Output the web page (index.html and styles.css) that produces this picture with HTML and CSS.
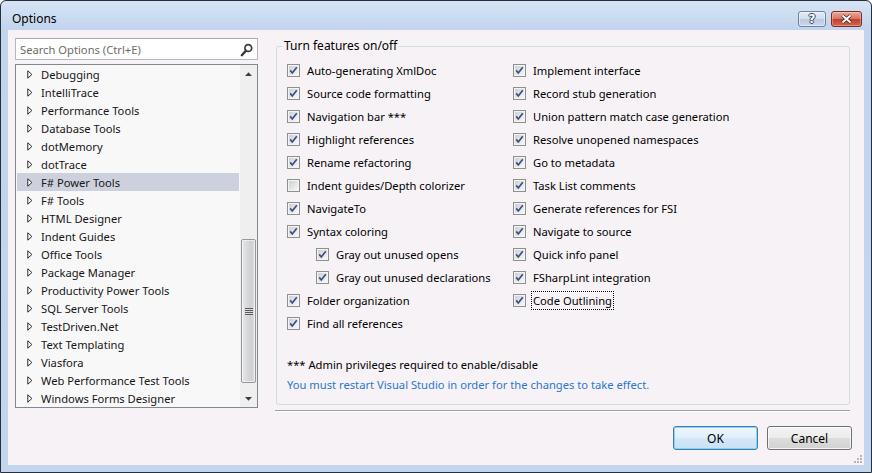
FILE: index.html
```html
<!DOCTYPE html>
<html>
<head>
<meta charset="utf-8">
<title>Options</title>
<link rel="stylesheet" href="styles.css">
</head>
<body>
<svg class="defs" width="0" height="0">
  <defs>
    <linearGradient id="cbg" x1="0" y1="0" x2="1" y2="1">
      <stop offset="0" stop-color="#cfd0d2"/>
      <stop offset="1" stop-color="#f7f7f7"/>
    </linearGradient>
    <symbol id="cb-on" viewBox="0 0 13 13">
      <rect x="0.5" y="0.5" width="12" height="12" fill="#f4f4f4" stroke="#8e8f8f"/>
      <rect x="2" y="2" width="9" height="9" fill="url(#cbg)"/>
      <path d="M3.2 6.4 L5.3 9 L9.8 3.2" fill="none" stroke="#3a4f88" stroke-width="1.7" stroke-linejoin="miter"/>
    </symbol>
    <symbol id="cb-off" viewBox="0 0 13 13">
      <rect x="0.5" y="0.5" width="12" height="12" fill="#f4f4f4" stroke="#8e8f8f"/>
      <rect x="2" y="2" width="9" height="9" fill="url(#cbg)"/>
    </symbol>
    <symbol id="tri" viewBox="0 0 6 9">
      <path d="M0.8 0.8 L4.9 4.5 L0.8 8.2 Z" fill="#fff" stroke="#2a2a2a" stroke-width="1"/>
    </symbol>
  </defs>
</svg>
<div class="window">
  <div class="titlebar">
    <span class="title">Options</span>
    <div class="tb-buttons">
      <div class="tb-btn tb-help"><span>?</span></div>
      <div class="tb-btn tb-close">
        <svg width="13" height="10" viewBox="0 0 13 10"><path d="M2.5 1.5 L10.5 8.5 M10.5 1.5 L2.5 8.5" stroke="#3b2420" stroke-width="3.6"/><path d="M2.5 1.5 L10.5 8.5 M10.5 1.5 L2.5 8.5" stroke="#fff" stroke-width="2"/></svg>
      </div>
    </div>
  </div>
  <div class="client">
    <div class="main">
      <div class="left">
        <div class="search">
          <span class="placeholder">Search Options (Ctrl+E)</span>
          <svg class="mag" width="13" height="14" viewBox="0 0 13 14"><circle cx="8.3" cy="5" r="3.4" fill="none" stroke="#3a3a3a" stroke-width="1.7"/><path d="M6 7.6 L1.8 12.2" stroke="#3a3a3a" stroke-width="2.4" stroke-linecap="round"/></svg>
        </div>
        <div class="tree">
          <div class="tree-list">
            <div class="row"><svg class="tri"><use href="#tri"/></svg>Debugging</div>
            <div class="row"><svg class="tri"><use href="#tri"/></svg>IntelliTrace</div>
            <div class="row"><svg class="tri"><use href="#tri"/></svg>Performance Tools</div>
            <div class="row"><svg class="tri"><use href="#tri"/></svg>Database Tools</div>
            <div class="row"><svg class="tri"><use href="#tri"/></svg>dotMemory</div>
            <div class="row"><svg class="tri"><use href="#tri"/></svg>dotTrace</div>
            <div class="row sel"><svg class="tri"><use href="#tri"/></svg>F# Power Tools</div>
            <div class="row"><svg class="tri"><use href="#tri"/></svg>F# Tools</div>
            <div class="row"><svg class="tri"><use href="#tri"/></svg>HTML Designer</div>
            <div class="row"><svg class="tri"><use href="#tri"/></svg>Indent Guides</div>
            <div class="row"><svg class="tri"><use href="#tri"/></svg>Office Tools</div>
            <div class="row"><svg class="tri"><use href="#tri"/></svg>Package Manager</div>
            <div class="row"><svg class="tri"><use href="#tri"/></svg>Productivity Power Tools</div>
            <div class="row"><svg class="tri"><use href="#tri"/></svg>SQL Server Tools</div>
            <div class="row"><svg class="tri"><use href="#tri"/></svg>TestDriven.Net</div>
            <div class="row"><svg class="tri"><use href="#tri"/></svg>Text Templating</div>
            <div class="row"><svg class="tri"><use href="#tri"/></svg>Viasfora</div>
            <div class="row"><svg class="tri"><use href="#tri"/></svg>Web Performance Test Tools</div>
            <div class="row"><svg class="tri"><use href="#tri"/></svg>Windows Forms Designer</div>
          </div>
          <div class="scrollbar">
            <div class="sb-btn"><svg width="7" height="4" viewBox="0 0 7 4"><path d="M0 4 L3.5 0.3 L7 4 Z" fill="#3d3d3d"/></svg></div>
            <div class="sb-gap"></div>
            <div class="sb-thumb">
              <svg width="8" height="7" viewBox="0 0 8 7"><path d="M0 0.5 H8 M0 2.5 H8 M0 4.5 H8 M0 6.5 H8" stroke="#5b5b5b" stroke-width="1"/></svg>
            </div>
            <div class="sb-rest"></div>
            <div class="sb-btn"><svg width="7" height="4" viewBox="0 0 7 4"><path d="M0 0 L3.5 3.7 L7 0 Z" fill="#3d3d3d"/></svg></div>
          </div>
        </div>
      </div>
      <div class="right">
        <fieldset class="group">
          <legend>Turn features on/off</legend>
          <div class="cols">
            <div class="col col1">
              <div class="cb-row"><svg class="cb"><use href="#cb-on"/></svg><span>Auto-generating XmlDoc</span></div>
              <div class="cb-row"><svg class="cb"><use href="#cb-on"/></svg><span>Source code formatting</span></div>
              <div class="cb-row"><svg class="cb"><use href="#cb-on"/></svg><span>Navigation bar ***</span></div>
              <div class="cb-row"><svg class="cb"><use href="#cb-on"/></svg><span>Highlight references</span></div>
              <div class="cb-row"><svg class="cb"><use href="#cb-on"/></svg><span>Rename refactoring</span></div>
              <div class="cb-row"><svg class="cb"><use href="#cb-off"/></svg><span>Indent guides/Depth colorizer</span></div>
              <div class="cb-row"><svg class="cb"><use href="#cb-on"/></svg><span>NavigateTo</span></div>
              <div class="cb-row"><svg class="cb"><use href="#cb-on"/></svg><span>Syntax coloring</span></div>
              <div class="cb-row sub"><svg class="cb"><use href="#cb-on"/></svg><span>Gray out unused opens</span></div>
              <div class="cb-row sub"><svg class="cb"><use href="#cb-on"/></svg><span>Gray out unused declarations</span></div>
              <div class="cb-row"><svg class="cb"><use href="#cb-on"/></svg><span>Folder organization</span></div>
              <div class="cb-row"><svg class="cb"><use href="#cb-on"/></svg><span>Find all references</span></div>
            </div>
            <div class="col col2">
              <div class="cb-row"><svg class="cb"><use href="#cb-on"/></svg><span>Implement interface</span></div>
              <div class="cb-row"><svg class="cb"><use href="#cb-on"/></svg><span>Record stub generation</span></div>
              <div class="cb-row"><svg class="cb"><use href="#cb-on"/></svg><span>Union pattern match case generation</span></div>
              <div class="cb-row"><svg class="cb"><use href="#cb-on"/></svg><span>Resolve unopened namespaces</span></div>
              <div class="cb-row"><svg class="cb"><use href="#cb-on"/></svg><span>Go to metadata</span></div>
              <div class="cb-row"><svg class="cb"><use href="#cb-on"/></svg><span>Task List comments</span></div>
              <div class="cb-row"><svg class="cb"><use href="#cb-on"/></svg><span>Generate references for FSI</span></div>
              <div class="cb-row"><svg class="cb"><use href="#cb-on"/></svg><span>Navigate to source</span></div>
              <div class="cb-row"><svg class="cb"><use href="#cb-on"/></svg><span>Quick info panel</span></div>
              <div class="cb-row"><svg class="cb"><use href="#cb-on"/></svg><span>FSharpLint integration</span></div>
              <div class="cb-row"><svg class="cb"><use href="#cb-on"/></svg><span class="focus">Code Outlining</span></div>
            </div>
          </div>
          <div class="notes">
            <div class="note">*** Admin privileges required to enable/disable</div>
            <div class="note link">You must restart Visual Studio in order for the changes to take effect.</div>
          </div>
        </fieldset>
        <div class="sep"></div>
      </div>
    </div>
    <div class="footer">
      <div class="btn def">OK</div>
      <div class="btn">Cancel</div>
    </div>
    <svg class="grip" width="8" height="8" viewBox="0 0 8 8">
      <g fill="#b8b4b8">
        <rect x="6" y="0" width="2" height="2"/>
        <rect x="3" y="3" width="2" height="2"/><rect x="6" y="3" width="2" height="2"/>
        <rect x="0" y="6" width="2" height="2"/><rect x="3" y="6" width="2" height="2"/><rect x="6" y="6" width="2" height="2"/>
      </g>
    </svg>
  </div>
</div>
</body>
</html>
```
FILE: styles.css
```css
* { box-sizing: border-box; }
html, body { margin: 0; padding: 0; }
body {
  width: 872px;
  height: 473px;
  overflow: hidden;
  background: #fff;
  font-family: "Noto Sans", "Open Sans", sans-serif;
  font-size: 11.2px;
  color: #000;
}
.defs { position: absolute; width: 0; height: 0; overflow: hidden; }

.window {
  width: 872px;
  height: 473px;
  border: 1px solid #26303c;
  border-radius: 6px 6px 0 0;
  background: linear-gradient(#d6e3f4, #c1d4ee 30px, #c3d6ef);
  padding: 0 7px 7px 7px;
  display: flex;
  flex-direction: column;
}

.titlebar {
  height: 29px;
  display: flex;
  align-items: flex-start;
  padding-left: 4px;
}
.title { font-size: 12px; line-height: 16px; margin-top: 10px; color: #000; }
.tb-buttons {
  margin-left: auto;
  margin-top: 10px;
  margin-right: 2px;
  display: flex;
  gap: 5px;
}
.tb-btn {
  height: 16px;
  border-radius: 3px;
  display: flex;
  align-items: center;
  justify-content: center;
}
.tb-help {
  width: 28px;
  border: 1px solid #6f819d;
  background: linear-gradient(#e6edf6, #cfdcec 50%, #b9cae2 50%, #c8d7ec);
  box-shadow: inset 0 0 0 1px rgba(255,255,255,0.45);
}
.tb-help span {
  font-family: "DejaVu Sans", sans-serif;
  font-weight: bold;
  font-size: 12px;
  line-height: 12px;
  color: #fff;
  text-shadow: 1px 0 0 #3b4658, -1px 0 0 #3b4658, 0 1px 0 #3b4658, 0 -1px 0 #3b4658;
}
.tb-close {
  width: 31px;
  border: 1px solid #7d2a22;
  background: linear-gradient(#eaa898, #d8725f 50%, #c43c27 50%, #d3664f);
  box-shadow: inset 0 0 0 1px rgba(255,255,255,0.3);
}

.client {
  flex: 1;
  background: #f6f2f6;
  display: flex;
  flex-direction: column;
  position: relative;
}

.main {
  display: flex;
  padding: 8px 14px 0 7px;
}
.left {
  width: 243px;
  display: flex;
  flex-direction: column;
  gap: 4px;
}
.search {
  height: 22px;
  border: 1px solid #b5b8c0;
  border-top-color: #a6a9b0;
  background: #fff;
  display: flex;
  align-items: center;
  padding: 0 4px 0 4px;
}
.placeholder { color: #6b6b6b; flex: 1; }
.mag { margin-top: 1px; }

.tree {
  height: 344px;
  border: 1px solid #828790;
  background: #f9f8f9;
  display: flex;
}
.tree-list {
  flex: 1;
  padding: 0 1px 0 1px;
}
.row {
  height: 18px;
  display: flex;
  align-items: center;
  padding-left: 10px;
  color: #161616;
  white-space: nowrap;
}
.row.sel { background: #cdd1de; }
.tri { width: 6px; height: 9px; margin-right: 8px; flex: none; }

.scrollbar {
  width: 17px;
  background: #f0efef;
  display: flex;
  flex-direction: column;
}
.sb-btn {
  height: 17px;
  display: flex;
  align-items: center;
  justify-content: center;
}
.sb-gap { height: 157px; }
.sb-thumb {
  height: 144px;
  margin: 0 1px;
  border: 1px solid #979797;
  border-radius: 2px;
  background: linear-gradient(90deg, #e8e8ea, #dcdde0 30%, #cfd0d5 70%, #dedfe2);
  box-shadow: inset 0 0 0 1px rgba(255,255,255,0.55);
  display: flex;
  align-items: center;
  justify-content: center;
}
.sb-rest { flex: 1; }

.right {
  margin-left: 17px;
  flex: 1;
  display: flex;
  flex-direction: column;
}
.group {
  margin: 0 0 0 1px;
  border: 1px solid #d3dbe2;
  border-radius: 3px;
  padding: 5px 10px 9px 10px;
  min-width: 0;
}
.group legend {
  padding: 0 2px;
  margin-left: -5px;
  line-height: 16px;
  font-size: 12px;
}
.cols { display: flex; }
.col1 { width: 226px; flex: none; }
.col2 { flex: 1; }
.cb-row {
  height: 23px;
  display: flex;
  align-items: center;
  gap: 7px;
  white-space: nowrap;
}
.cb-row.sub { padding-left: 29px; }
.cb { width: 13px; height: 13px; flex: none; }
.focus {
  outline: 1px dotted #000;
  outline-offset: 1px;
}
.notes { margin-top: 20px; }
.note { height: 20px; line-height: 20px; white-space: nowrap; }
.link { color: #2a78cd; }
.sep {
  margin-top: 5px;
  border-top: 1px solid #a0a0a0;
  border-bottom: 1px solid #ffffff;
}

.footer {
  display: flex;
  justify-content: flex-end;
  gap: 9px;
  padding-right: 12px;
  margin-top: 14px;
}
.btn {
  width: 85px;
  height: 24px;
  border: 1px solid #707070;
  border-radius: 3px;
  background: linear-gradient(#f3f3f3, #ebebeb 50%, #dddddd 50%, #d2d2d2);
  box-shadow: inset 0 0 0 1px rgba(255,255,255,0.75);
  display: flex;
  align-items: center;
  justify-content: center;
  font-size: 12px;
}
.btn.def {
  border-color: #3c7fb1;
  background: linear-gradient(#eef6fc, #e1effa 50%, #d3e8f8 50%, #c8e1f5);
  box-shadow: inset 0 0 0 1px #8fd0f2;
}
.grip {
  position: absolute;
  right: 2px;
  bottom: 2px;
}
```
